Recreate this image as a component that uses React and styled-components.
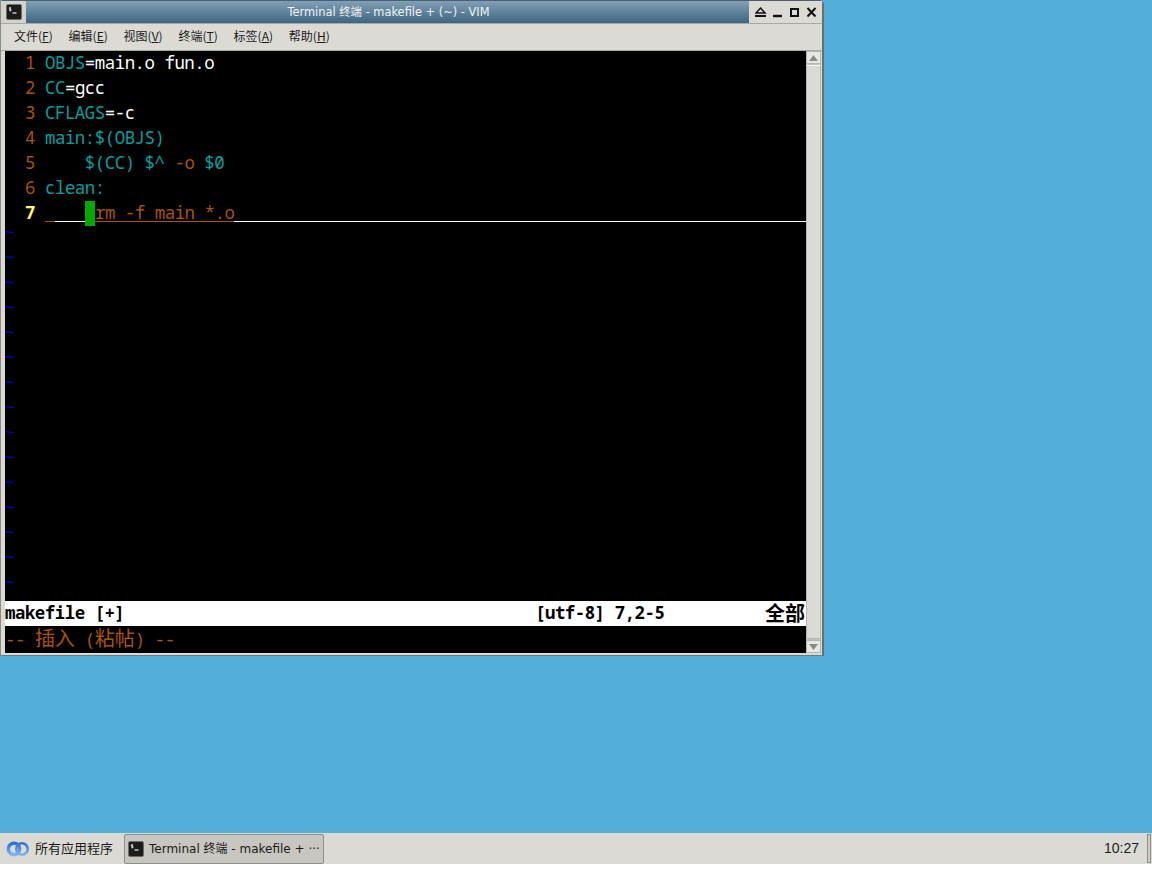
import React from 'react'
import styled, { createGlobalStyle } from 'styled-components'

const Global = createGlobalStyle`
  html, body { margin: 0; padding: 0; background: #fff; }
  body { font-family: "DejaVu Sans", "Noto Sans CJK SC", sans-serif; overflow: hidden; }
`
const Page = styled.div`
  width: 1152px; height: 896px; display: flex; flex-direction: column; overflow: hidden;
`
const Desktop = styled.div`
  height: 833px; background: #54aeda; flex: none;
`
const Win = styled.div`
  width: 824px; height: 656px; box-sizing: border-box; display: flex; flex-direction: column;
  background: #dcdad5; border: 1px solid #6e6e6a; border-top-color: #4d5f70; border-top-right-radius: 5px; border-top-left-radius: 3px;
  border-left-color: #8a8a86; border-bottom-color: #77777a; border-right-width: 2px; border-right-color: #6d6d6a;
`
const TitleBar = styled.div`
  height: 22px; flex: none; display: flex; border-bottom: 1px solid #a9a8a3; background: #dcdad5;
`
const WinMenuBtn = styled.div`
  width: 25px; display: flex; align-items: center; justify-content: center; background: #d3d2cd;
`
const TitleText = styled.div`
  flex: 1; display: flex; align-items: center; justify-content: center; color: #f1f4f6;
  font-size: 11.4px; white-space: nowrap; padding: 0 0 2px 2px;
  background: linear-gradient(#80a0b6, #3f6580);
`
const WinButtons = styled.div`
  width: 73px; display: flex; align-items: center; justify-content: center;
`
const MenuBar = styled.div`
  height: 26px; box-sizing: border-box; flex: none; display: flex; align-items: center; padding: 0 0 3px 13px; gap: 15.8px;
  font-family: "Noto Sans CJK SC", sans-serif; font-size: 12px; color: #1a1a1a;
`
const MenuItem = styled.span`
  white-space: nowrap;
  u { text-underline-offset: 1px; }
`
const Body = styled.div`
  flex: 1; display: flex; min-height: 0; padding-left: 4px; padding-right: 1px;
  padding-bottom: 2px; border-top: 1px solid #a9a8a3;
`
const Term = styled.div`
  width: 801px; background: #000; font-family: "Noto Sans Mono", "DejaVu Sans Mono", "Noto Sans CJK SC", monospace;
  font-size: 17.4px; letter-spacing: -0.48px; color: #fff; display: flex; flex-direction: column; white-space: pre;
`
const Row = styled.div`
  height: 25px; line-height: 23px; flex: none; display: flex;
`
const Gutter = styled.span`
  width: 40px; flex: none; text-align: right; padding-right: 10px; box-sizing: border-box;
  color: ${p => (p.$active ? '#ffff55' : '#aa5500')};
  font-weight: ${p => (p.$active ? 700 : 400)};
`
const Cyan = styled.span` color: #00a0a0; `
const Brown = styled.span` color: #aa5500; `
const Wide = styled.span` font-family: "Noto Sans CJK SC", sans-serif; font-size: 20px; letter-spacing: 0; `
const Tilde = styled.span`
  color: #0000c8; font-family: "Liberation Mono", monospace; font-size: 16.6px; letter-spacing: 0; line-height: 15px;
`
const Seg = styled.span`
  display: block; height: 20px; flex: ${p => (p.$fill ? 1 : 'none')};
  width: ${p => (p.$w ? `${p.$w}px` : 'auto')};
  border-bottom: 1px solid ${p => p.$line};
  color: #aa5500;
`
const Cursor = styled.span`
  width: 10px; height: 25px; flex: none; background: #00aa00;
`
const Status = styled.div`
  height: 25px; line-height: 23px; flex: none; display: flex; background: #fff; color: #000; font-weight: 700;
`
const StatusName = styled.span` width: 530px; `
const StatusPos = styled.span` width: 230px; `
const Scrollbar = styled.div`
  width: 15px; flex: none; display: flex; flex-direction: column; background: #c5c3bd;
`
const ScrollBtn = styled.div`
  height: 13px; flex: none; background: #e8e7e3; border: 1px solid #b8b6b0; box-sizing: border-box;
  display: flex; align-items: center; justify-content: center;
`
const Thumb = styled.div`
  flex: 1; margin: 1px 0; background: #dcdad5; border: 1px solid #b8b6b0; box-sizing: border-box; border-top-color: #f4f3f0;
`
const Taskbar = styled.div`
  height: 31px; flex: none; background: #dcdad5; display: flex; align-items: center;
  font-size: 12px; color: #1a1a1a; white-space: nowrap;
`
const AppMenu = styled.div`
  display: flex; align-items: center; gap: 5px; width: 124px; padding-left: 6px; box-sizing: border-box;
  font-family: "Noto Sans CJK SC", sans-serif; font-size: 13px;
`
const TaskBtn = styled.div`
  width: 200px; height: 30px; margin-top: 1px; box-sizing: border-box; border: 1px solid #8f8d87; border-radius: 2px;
  background: #c8c6c1; display: flex; align-items: center; gap: 5px; padding-left: 3px;
  svg { flex: none; }
`
const Label = styled.span` padding-bottom: 3px; `
const Clock = styled.div`
  margin-left: auto; margin-right: 8px; padding-bottom: 2px; font-family: "Liberation Sans", sans-serif; font-size: 14px;
`
const Grip = styled.div`
  width: 2px; height: 27px; margin-right: 1px; border: 1px solid #8f8d87; background: #cfcdc8;
`
const Rest = styled.div` flex: 1; background: #fff; `

const TermIcon = ({ size }) => (
  <svg width={size} height={size} viewBox="0 0 16 16">
    <rect x="0.5" y="0.5" width="15" height="15" rx="1.5" fill="#1c1c1c" stroke="#6c6c6c" />
    <path d="M5 3.8H3.4v1.4H5v1.4H3.4M4.2 3v4.4" fill="none" stroke="#eee" strokeWidth="0.8" />
    <path d="M6.5 9h4" stroke="#eee" strokeWidth="1.2" />
  </svg>
)

const Logo = () => (
  <svg width="24" height="18" viewBox="0 0 24 18">
    <defs>
      <linearGradient id="ringA" x1="0" y1="0" x2="0" y2="1">
        <stop offset="0" stopColor="#2f6fd8" />
        <stop offset="1" stopColor="#7fb6f0" />
      </linearGradient>
    </defs>
    <circle cx="8" cy="9" r="5.7" fill="none" stroke="url(#ringA)" strokeWidth="3.4" />
    <circle cx="16" cy="9" r="5.7" fill="none" stroke="url(#ringA)" strokeWidth="2.6" />
  </svg>
)

const WinIcons = () => (
  <svg width="62" height="12" viewBox="0 0 62 12">
    <path d="M5.5 2 L10 7 H1 Z" fill="none" stroke="#111" strokeWidth="1.5" />
    <path d="M0 10h11" stroke="#111" strokeWidth="2" />
    <path d="M18 10h9" stroke="#111" strokeWidth="2.4" />
    <rect x="36" y="3" width="7" height="7" fill="none" stroke="#111" strokeWidth="2" />
    <path d="M52.5 2l8 8.5M60.5 2l-8 8.5" stroke="#111" strokeWidth="2" />
  </svg>
)

const menus = [['文件', 'F'], ['编辑', 'E'], ['视图', 'V'], ['终端', 'T'], ['标签', 'A'], ['帮助', 'H']]

const App = () => (
  <Page>
    <Global />
    <Desktop>
      <Win>
        <TitleBar>
          <WinMenuBtn><TermIcon size={16} /></WinMenuBtn>
          <TitleText>Terminal 终端 - makefile + (~) - VIM</TitleText>
          <WinButtons><WinIcons /></WinButtons>
        </TitleBar>
        <MenuBar>
          {menus.map(([label, key]) => (
            <MenuItem key={key}>{label}(<u>{key}</u>)</MenuItem>
          ))}
        </MenuBar>
        <Body>
          <Term>
            <Row><Gutter>1</Gutter><span><Cyan>OBJS</Cyan>=main.o fun.o</span></Row>
            <Row><Gutter>2</Gutter><span><Cyan>CC</Cyan>=gcc</span></Row>
            <Row><Gutter>3</Gutter><span><Cyan>CFLAGS</Cyan>=-c</span></Row>
            <Row><Gutter>4</Gutter><Cyan>main:$(OBJS)</Cyan></Row>
            <Row><Gutter>5</Gutter><span>    <Cyan>$(CC) $^</Cyan> <Brown>-o</Brown> <Cyan>$0</Cyan></span></Row>
            <Row><Gutter>6</Gutter><Cyan>clean:</Cyan></Row>
            <Row>
              <Gutter $active>7</Gutter>
              <Seg $w={10} $line="#aa5500" />
              <Seg $w={30} $line="#fff" />
              <Cursor />
              <Seg $line="#aa5500">rm -f main *.o</Seg>
              <Seg $fill $line="#fff" />
            </Row>
            {Array.from({ length: 15 }, (_, i) => (
              <Row key={i}><Tilde>~</Tilde></Row>
            ))}
            <Status>
              <StatusName>makefile [+]</StatusName>
              <StatusPos>[utf-8] 7,2-5</StatusPos>
              <Wide>全部</Wide>
            </Status>
            <Row><Brown>-- <Wide>插入</Wide> (<Wide>粘帖</Wide>) --</Brown></Row>
          </Term>
          <Scrollbar>
            <ScrollBtn>
              <svg width="9" height="6" viewBox="0 0 9 6"><path d="M4.5 0L9 6H0Z" fill="#8a8984" /></svg>
            </ScrollBtn>
            <Thumb />
            <ScrollBtn>
              <svg width="9" height="6" viewBox="0 0 9 6"><path d="M0 0H9L4.5 6Z" fill="#8a8984" /></svg>
            </ScrollBtn>
          </Scrollbar>
        </Body>
      </Win>
    </Desktop>
    <Taskbar>
      <AppMenu><Logo /><Label>所有应用程序</Label></AppMenu>
      <TaskBtn><TermIcon size={16} /><Label>Terminal 终端 - makefile + ···</Label></TaskBtn>
      <Clock>10:27</Clock>
      <Grip />
    </Taskbar>
    <Rest />
  </Page>
)

export default App
